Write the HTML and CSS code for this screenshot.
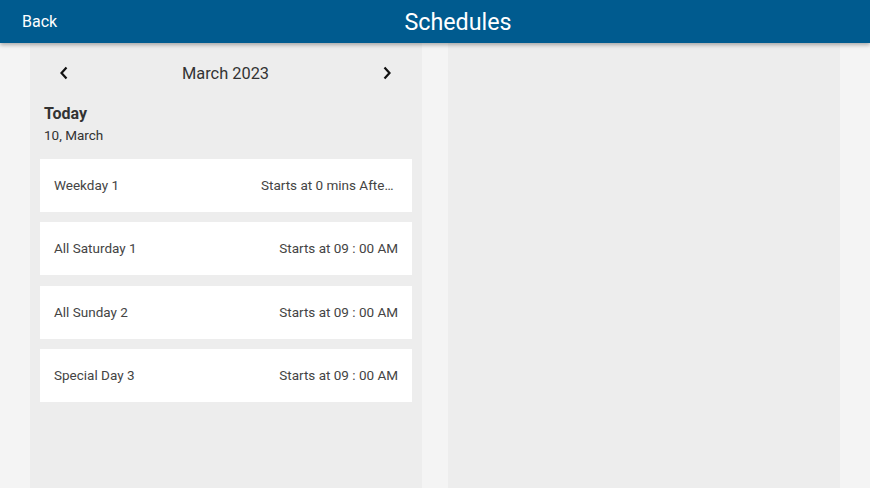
FILE: index.html
```html
<!DOCTYPE html>
<html>
<head>
<meta charset="utf-8">
<link rel="stylesheet" href="styles.css">
</head>
<body>
<header class="toolbar">
  <span class="back">Back</span>
  <h1 class="title">Schedules</h1>
</header>
<main class="content">
  <section class="panel left">
    <div class="month-nav">
      <span class="chev"><svg width="10" height="14" viewBox="0 0 10 14"><path d="M7.5 1.5 L2.5 7 L7.5 12.5" fill="none" stroke="#111" stroke-width="2.2"/></svg></span>
      <span class="month">March 2023</span>
      <span class="chev"><svg width="10" height="14" viewBox="0 0 10 14"><path d="M2.5 1.5 L7.5 7 L2.5 12.5" fill="none" stroke="#111" stroke-width="2.2"/></svg></span>
    </div>
    <div class="today">
      <div class="today-label">Today</div>
      <div class="today-date">10, March</div>
    </div>
    <ul class="list">
      <li class="card"><span class="name">Weekday 1</span><span class="time">Starts at 0 mins After Sunrise</span></li>
      <li class="card"><span class="name">All Saturday 1</span><span class="time">Starts at 09 : 00 AM</span></li>
      <li class="card"><span class="name">All Sunday 2</span><span class="time">Starts at 09 : 00 AM</span></li>
      <li class="card"><span class="name">Special Day 3</span><span class="time">Starts at 09 : 00 AM</span></li>
    </ul>
  </section>
  <section class="panel right"></section>
</main>
</body>
</html>
```

FILE: styles.css
```css
* { box-sizing: border-box; }
html, body { margin: 0; padding: 0; height: 100%; }
body {
  font-family: Roboto, "Liberation Sans", sans-serif;
  background: #f4f4f4;
  color: #333;
  overflow: hidden;
}
.toolbar {
  position: relative;
  z-index: 2;
  height: 43px;
  background: #005b8f;
  color: #fff;
  display: flex;
  align-items: center;
  box-shadow: 0 2px 4px rgba(0,0,0,0.3);
}
.back {
  font-size: 16px;
  padding-left: 22px;
  width: 46px;
  white-space: nowrap;
}
.title {
  flex: 1;
  margin: 0;
  font-size: 23.3px;
  font-weight: 400;
  text-align: center;
}
.content {
  display: grid;
  grid-template-columns: 1fr 1fr;
  gap: 26px;
  padding: 0 30px;
  height: calc(100% - 43px);
}
.panel {
  min-width: 0;
  background: #ededed;
}
.left { padding: 0 10px; }
.month-nav {
  display: flex;
  align-items: center;
  justify-content: space-between;
  height: 60px;
  padding: 0 20px 0 19px;
}
.chev { display: flex; width: 10px; }
.month { font-size: 16.4px; color: #333; }
.today { padding: 0 4px; }
.today-label { font-size: 16px; font-weight: 700; color: #333; line-height: 22px; }
.today-date { font-size: 13.5px; color: #333; line-height: 21px; }
.list {
  list-style: none;
  margin: 13px 0 0;
  padding: 0;
  display: flex;
  flex-direction: column;
  gap: 10.4px;
}
.card {
  background: #fff;
  height: 53px;
  display: flex;
  align-items: center;
  justify-content: space-between;
  padding: 0 14px 1px;
  font-size: 13.5px;
  color: #444;
}
.time {
  max-width: 137px;
  white-space: nowrap;
  overflow: hidden;
  text-overflow: ellipsis;
}
```
